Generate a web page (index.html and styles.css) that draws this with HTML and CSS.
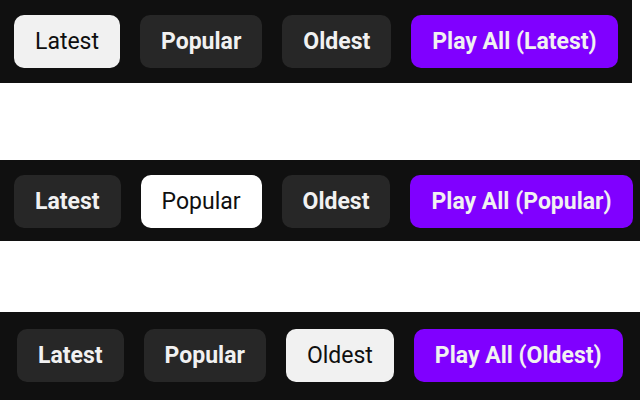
FILE: index.html
```html
<!DOCTYPE html>
<html>
<head>
<meta charset="utf-8">
<link rel="stylesheet" href="styles.css">
</head>
<body>
<div class="page">
  <div class="bar bar-first">
    <button class="chip chip-active">Latest</button>
    <button class="chip">Popular</button>
    <button class="chip">Oldest</button>
    <button class="play">Play All (Latest)</button>
  </div>
  <div class="bar bar-second">
    <button class="chip">Latest</button>
    <button class="chip chip-active chip-bright">Popular</button>
    <button class="chip">Oldest</button>
    <button class="play">Play All (Popular)</button>
  </div>
  <div class="bar bar-third">
    <button class="chip">Latest</button>
    <button class="chip">Popular</button>
    <button class="chip chip-active">Oldest</button>
    <button class="play">Play All (Oldest)</button>
  </div>
</div>
</body>
</html>
```
FILE: styles.css
```css
html, body {
  margin: 0;
  padding: 0;
  background: #ffffff;
  overflow: hidden;
}
.page {
  display: flex;
  flex-direction: column;
  align-items: flex-start;
}
.bar {
  display: flex;
  gap: 20px;
  width: max-content;
  background: #101010;
  padding: 15px 14px;
  box-sizing: border-box;
}
.bar-first {
  height: 83px;
  margin-bottom: 77px;
}
.bar-second {
  height: 81px;
  margin-bottom: 71px;
}
.bar-third {
  padding: 17px;
  height: 90px;
}
.chip, .play {
  font-family: Roboto, "Liberation Sans", sans-serif;
  font-size: 23px;
  font-weight: 700;
  height: 53px;
  padding: 0 21px;
  border: none;
  border-radius: 10px;
  background: #272727;
  color: #f1f1f1;
  line-height: 53px;
  white-space: nowrap;
}
.chip-active {
  background: #f1f1f1;
  color: #0f0f0f;
  font-weight: 400;
}
.chip-bright {
  background: #ffffff;
}
.play {
  background: #8000ff;
  color: #f1f1f1;
}
```
